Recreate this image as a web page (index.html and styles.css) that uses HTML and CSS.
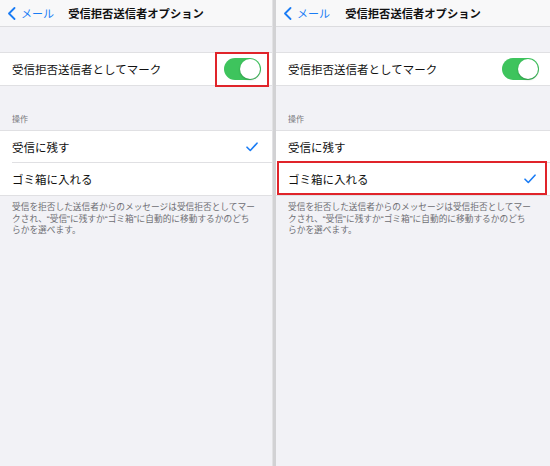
FILE: index.html
```html
<!DOCTYPE html>
<html lang="ja">

<head>
  <meta charset="UTF-8">
  <meta name="viewport" content="width=device-width, initial-scale=1.0">
  <title>受信拒否送信者オプション</title>
  <link rel="stylesheet" href="styles.css">
</head>

<body>

  <!-- Left screen: toggle highlighted -->
  <div class="screen screen-left">
    <div class="nav">
      <a class="nav-back">
        <svg class="chevron" width="9" height="13" viewBox="0 0 9 13">
          <path d="M7.5 1 L2 6.5 L7.5 12" fill="none" stroke="#1a7cf5" stroke-width="1.8" stroke-linecap="round" stroke-linejoin="round"/>
        </svg>
        <span>メール</span>
      </a>
      <div class="nav-title">受信拒否送信者オプション</div>
      <div></div>
    </div>

    <div class="group group-first">
      <div class="row">
        <span class="row-label">受信拒否送信者としてマーク</span>
        <span class="switch on highlight"><span class="knob"></span></span>
      </div>
    </div>

    <div class="group-header">操作</div>
    <div class="group">
      <div class="row">
        <span class="row-label">受信に残す</span>
        <svg class="check" width="12" height="10" viewBox="0 0 12 10">
          <path d="M1 5.2 L4.3 8.5 L11 1.2" fill="none" stroke="#1a7cf5" stroke-width="1.6" stroke-linecap="round" stroke-linejoin="round"/>
        </svg>
      </div>
      <div class="row">
        <span class="row-label">ゴミ箱に入れる</span>
      </div>
    </div>
    <p class="group-footer">受信を拒否した送信者からのメッセージは受信拒否としてマークされ、“受信”に残すか“ゴミ箱”に自動的に移動するかのどちらかを選べます。</p>
  </div>

  <div class="divider"></div>

  <!-- Right screen: trash option highlighted -->
  <div class="screen screen-right">
    <div class="nav">
      <a class="nav-back">
        <svg class="chevron" width="9" height="13" viewBox="0 0 9 13">
          <path d="M7.5 1 L2 6.5 L7.5 12" fill="none" stroke="#1a7cf5" stroke-width="1.8" stroke-linecap="round" stroke-linejoin="round"/>
        </svg>
        <span>メール</span>
      </a>
      <div class="nav-title">受信拒否送信者オプション</div>
      <div></div>
    </div>

    <div class="group group-first">
      <div class="row">
        <span class="row-label">受信拒否送信者としてマーク</span>
        <span class="switch on"><span class="knob"></span></span>
      </div>
    </div>

    <div class="group-header">操作</div>
    <div class="group">
      <div class="row">
        <span class="row-label">受信に残す</span>
      </div>
      <div class="row row-marked">
        <span class="row-label">ゴミ箱に入れる</span>
        <svg class="check" width="12" height="10" viewBox="0 0 12 10">
          <path d="M1 5.2 L4.3 8.5 L11 1.2" fill="none" stroke="#1a7cf5" stroke-width="1.6" stroke-linecap="round" stroke-linejoin="round"/>
        </svg>
      </div>
    </div>
    <p class="group-footer">受信を拒否した送信者からのメッセージは受信拒否としてマークされ、“受信”に残すか“ゴミ箱”に自動的に移動するかのどちらかを選べます。</p>
  </div>

</body>

</html>
```

FILE: styles.css
```css
body {
  margin: 0;
  height: 466px;
  display: flex;
  overflow: hidden;
  font-family: "Liberation Sans", "Noto Sans CJK JP", sans-serif;
  background-color: #f2f2f6;
  color: #111;
}

.screen {
  height: 100%;
  background-color: #f2f2f6;
}

.screen-left {
  width: 272px;
}

.screen-right {
  width: 274px;
}

.divider {
  width: 4px;
  background-color: #d2d2d4;
  border-left: 1px solid #e2e2e4;
  box-sizing: border-box;
}

/* Navigation bar */
.nav {
  height: 26px;
  display: grid;
  grid-template-columns: 1fr auto 1fr;
  align-items: center;
  background-color: #f8f8f9;
  border-bottom: 1px solid #dcdcdf;
}

.nav-back {
  display: flex;
  align-items: center;
  padding-left: 7px;
  color: #1a7cf5;
  font-size: 11px;
}

.nav-back span {
  margin-left: 5px;
}

.chevron {
  display: block;
}

.nav-title {
  font-size: 11.3px;
  font-weight: bold;
}

/* Grouped table */
.group {
  background-color: white;
  border-top: 1px solid #e0e0e3;
  border-bottom: 1px solid #e0e0e3;
}

.group-first {
  margin-top: 25px;
}

.group-header {
  padding: 29px 12px 6px;
  font-size: 8px;
  line-height: 9px;
  color: #77777c;
}

.row {
  position: relative;
  height: 32px;
  display: flex;
  align-items: center;
  justify-content: space-between;
  padding: 0 11px 0 12px;
}

.row + .row::before {
  content: "";
  position: absolute;
  top: -1px;
  left: 12px;
  right: 0;
  border-top: 1px solid #e0e0e3;
}

.row-label {
  font-size: 11.5px;
}

.check {
  display: block;
  margin-right: 3px;
}

/* Switch */
.switch {
  position: relative;
  width: 37px;
  height: 22px;
  border-radius: 11px;
  background-color: #e5e5ea;
}

.switch.on {
  background-color: #3ec45d;
}

.knob {
  position: absolute;
  top: 1px;
  left: 1px;
  width: 20px;
  height: 20px;
  border-radius: 50%;
  background-color: white;
  box-shadow: 0 1px 2px rgba(0, 0, 0, 0.25);
}

.switch.on .knob {
  left: 16px;
}

/* Red annotation boxes */
.highlight::after,
.row-marked::after {
  content: "";
  position: absolute;
  border: 2px solid #e0242a;
}

.highlight::after {
  top: -6px;
  bottom: -7px;
  left: -9px;
  right: -8px;
}

.row-marked::after {
  top: -2px;
  bottom: 0;
  left: 1px;
  right: 3px;
}

.group-footer {
  width: 244px;
  margin: 6px 0 0;
  padding: 0 0 0 12px;
  font-size: 8.7px;
  line-height: 11.7px;
  color: #6e6e73;
}
```
